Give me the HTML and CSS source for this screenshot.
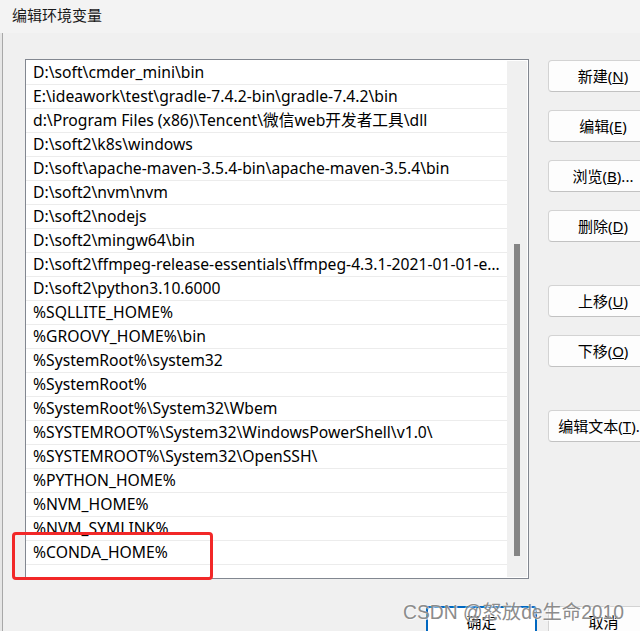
FILE: index.html
```html
<!DOCTYPE html>
<html lang="zh-CN">
<head>
<meta charset="utf-8">
<title>编辑环境变量</title>
<link rel="stylesheet" href="styles.css">
</head>
<body>
<div class="edge"></div>
<div class="titlebar">编辑环境变量</div>
<div class="main">
  <div class="list">
    <div class="rows">
      <div class="row">D:\soft\cmder_mini\bin</div>
      <div class="row">E:\ideawork\test\gradle-7.4.2-bin\gradle-7.4.2\bin</div>
      <div class="row">d:\Program Files (x86)\Tencent\微信web开发者工具\dll</div>
      <div class="row">D:\soft2\k8s\windows</div>
      <div class="row">D:\soft\apache-maven-3.5.4-bin\apache-maven-3.5.4\bin</div>
      <div class="row">D:\soft2\nvm\nvm</div>
      <div class="row">D:\soft2\nodejs</div>
      <div class="row">D:\soft2\mingw64\bin</div>
      <div class="row">D:\soft2\ffmpeg-release-essentials\ffmpeg-4.3.1-2021-01-01-essentials_build\bin</div>
      <div class="row">D:\soft2\python3.10.6000</div>
      <div class="row">%SQLLITE_HOME%</div>
      <div class="row">%GROOVY_HOME%\bin</div>
      <div class="row">%SystemRoot%\system32</div>
      <div class="row">%SystemRoot%</div>
      <div class="row">%SystemRoot%\System32\Wbem</div>
      <div class="row">%SYSTEMROOT%\System32\WindowsPowerShell\v1.0\</div>
      <div class="row">%SYSTEMROOT%\System32\OpenSSH\</div>
      <div class="row">%PYTHON_HOME%</div>
      <div class="row">%NVM_HOME%</div>
      <div class="row">%NVM_SYMLINK%</div>
      <div class="row">%CONDA_HOME%</div>
    </div>
    <div class="scrollbar"><div class="thumb"></div></div>
  </div>
  <div class="side">
    <div class="group">
      <button class="btn">新建(<u>N</u>)</button>
      <button class="btn">编辑(<u>E</u>)</button>
      <button class="btn">浏览(<u>B</u>)...</button>
      <button class="btn">删除(<u>D</u>)</button>
    </div>
    <div class="group">
      <button class="btn">上移(<u>U</u>)</button>
      <button class="btn">下移(<u>O</u>)</button>
    </div>
    <div class="group">
      <button class="btn">编辑文本(<u>T</u>)...</button>
    </div>
  </div>
</div>
<div class="footer">
  <button class="btn primary">确定</button>
  <button class="btn">取消</button>
</div>
<div class="highlight"></div>
<div class="watermark">CSDN @怒放de生命2010</div>
</body>
</html>
```
FILE: styles.css
```css
html, body {
  margin: 0;
  padding: 0;
}
body {
  width: 640px;
  height: 631px;
  overflow: hidden;
  position: relative;
  background: #f0f0f0;
  font-family: "Noto Sans", "Noto Sans CJK SC", sans-serif;
  color: #000;
}
.edge {
  position: absolute;
  left: 0;
  top: 33px;
  width: 2px;
  height: 598px;
  background: #e6e6e6;
  border-right: 1px solid #a8a8a8;
}
.titlebar {
  height: 33px;
  background: #f3f3f3;
  padding-left: 12px;
  font-size: 15px;
  line-height: 29px;
  color: #1a1a1a;
  font-family: "Noto Sans CJK SC", sans-serif;
}
.main {
  display: flex;
  align-items: flex-start;
  padding-left: 25px;
  margin-top: 26px;
  width: 700px;
}
.list {
  box-sizing: border-box;
  flex: 0 0 504px;
  width: 504px;
  height: 520px;
  border: 1px solid #828790;
  background: #fff;
  display: flex;
  padding: 1px 1px 1px 0;
  overflow: hidden;
}
.rows {
  flex: 1;
  min-width: 0;
}
.row {
  height: 23px;
  border-bottom: 1px solid #ececec;
  padding: 0 3px 0 7px;
  font-size: 15.7px;
  line-height: 23px;
  white-space: nowrap;
  overflow: hidden;
  text-overflow: ellipsis;
}
.scrollbar {
  flex: 0 0 20px;
  width: 20px;
  background: #f0f0f0;
  position: relative;
}
.thumb {
  position: absolute;
  left: 7px;
  top: 183px;
  width: 6px;
  height: 312px;
  background: #858585;
}
.side {
  flex: 0 0 auto;
  margin-left: 19px;
  padding-top: 1px;
  display: flex;
  flex-direction: column;
  gap: 43px;
}
.group {
  display: flex;
  flex-direction: column;
  gap: 18px;
}
.btn {
  box-sizing: border-box;
  flex: 0 0 auto;
  width: 110px;
  height: 32px;
  border: 1px solid #d3d3d3;
  border-bottom-color: #c2c2c2;
  border-radius: 4px;
  background: #fdfdfd;
  font-family: "Noto Sans", "Noto Sans CJK SC", sans-serif;
  font-size: 15px;
  color: #000;
  padding: 0;
  white-space: nowrap;
  text-align: center;
  line-height: 28px;
}
.footer {
  display: flex;
  gap: 11px;
  padding-left: 426px;
  margin-top: 27px;
  width: 700px;
}
.footer .btn {
  width: 111px;
}
.btn.primary {
  border: 2px solid #0067c0;
  background: #fff;
}
.highlight {
  position: absolute;
  left: 12px;
  top: 532px;
  width: 195px;
  height: 42px;
  border: 3px solid #f22828;
  border-radius: 4px;
}
.watermark {
  position: absolute;
  left: 403px;
  top: 597px;
  font-family: "Liberation Sans", "Noto Sans CJK SC", sans-serif;
  font-size: 19.3px;
  color: #8c8c8c;
  text-shadow: 1px 1px 0 rgba(255,255,255,0.7), -1px -1px 0 rgba(255,255,255,0.4);
  white-space: nowrap;
}
```
